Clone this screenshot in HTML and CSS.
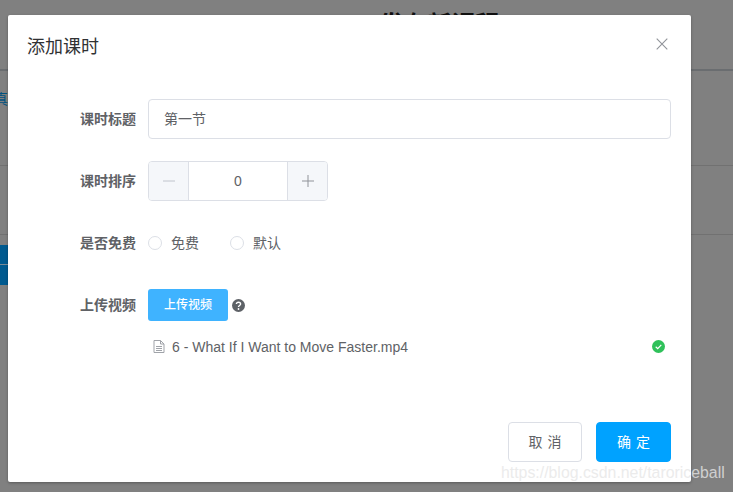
FILE: index.html
```html
<!DOCTYPE html>
<html lang="zh-CN">
<head>
<meta charset="utf-8">
<title>添加课时</title>
<link rel="stylesheet" href="styles.css">
</head>
<body>
<div class="page">
  <div class="bg-head"><span class="bg-title">发布新课程</span></div>
  <div class="bg-row bg-row-a"><span class="bg-link">真</span></div>
  <div class="bg-row bg-row-b"></div>
  <div class="bg-blue"><div class="bg-blue-cell"></div><div class="bg-blue-cell bg-blue-last"></div></div>

  <div class="modal">
    <header class="modal-head">
      <h2 class="modal-title">添加课时</h2>
      <svg class="close" width="12" height="12" viewBox="0 0 12 12" aria-label="关闭"><path d="M.7.7l10.6 10.6M11.3.7L.7 11.3" fill="none" stroke="#909399" stroke-width="1.1"/></svg>
    </header>
    <form class="form">
      <div class="item">
        <label class="label">课时标题</label>
        <div class="control"><div class="input">第一节</div></div>
      </div>
      <div class="item">
        <label class="label">课时排序</label>
        <div class="control">
          <div class="stepper">
            <span class="step step-l"><svg width="12" height="12" viewBox="0 0 12 12"><path d="M0 6h12" stroke="#c0c4cc" stroke-width="1"/></svg></span>
            <span class="value">0</span>
            <span class="step step-r"><svg width="12" height="12" viewBox="0 0 12 12"><path d="M0 6h12M6 0v12" stroke="#909399" stroke-width="1"/></svg></span>
          </div>
        </div>
      </div>
      <div class="item">
        <label class="label">是否免费</label>
        <div class="control radios">
          <span class="radio"><i class="dot"></i>免费</span>
          <span class="radio"><i class="dot"></i>默认</span>
        </div>
      </div>
      <div class="item item-upload">
        <label class="label">上传视频</label>
        <div class="control upload">
          <span class="upload-btn">上传视频</span>
          <svg class="help" width="13" height="13" viewBox="0 0 13 13"><circle cx="6.5" cy="6.5" r="6.5" fill="#5e6267"/><path d="M4.4 5.1c0-1.2.9-1.9 2.1-1.9s2.1.7 2.1 1.8c0 1.5-2.1 1.5-2.1 3" fill="none" stroke="#fff" stroke-width="1.4"/><circle cx="6.5" cy="10" r=".9" fill="#fff"/></svg>
        </div>
      </div>
      <div class="file">
        <svg class="file-icon" width="12" height="13" viewBox="0 0 12 13"><path d="M1 .5h6.5L11 4v8.5H1z" fill="none" stroke="#a0a3a9"/><path d="M7.5.5V4H11M3 6.5h6M3 8.5h6M3 10.5h6" fill="none" stroke="#a0a3a9"/></svg>
        <span class="file-name">6 - What If I Want to Move Faster.mp4</span>
        <svg class="file-ok" width="13" height="13" viewBox="0 0 13 13"><circle cx="6.5" cy="6.5" r="6.5" fill="#2fc15a"/><path d="M3.7 6.7l2 1.9 3.6-3.8" fill="none" stroke="#fff" stroke-width="1.2"/></svg>
      </div>
    </form>
    <footer class="modal-foot">
      <span class="btn btn-cancel">取 消</span>
      <span class="btn btn-ok">确 定</span>
    </footer>
  </div>
  <div class="watermark">https://blog.csdn.net/taroriceball</div>
</div>
</body>
</html>
```

FILE: styles.css
```css
* { box-sizing: border-box; }
html, body { margin: 0; padding: 0; }
body { font-family: "Liberation Sans", "Noto Sans CJK SC", sans-serif; }

.page {
  position: relative;
  width: 733px;
  height: 492px;
  overflow: hidden;
  background: #808080;
}

.bg-head {
  height: 71px;
  border-bottom: 2px solid #6a6d70;
  text-align: center;
}
.bg-title {
  display: block;
  margin-left: 146px;
  padding-top: 10px;
  font-size: 24px;
  line-height: 30px;
  font-weight: 700;
  color: #111;
}
.bg-row { border-bottom: 1px solid #717171; }
.bg-row-a { height: 95px; padding-top: 18px; }
.bg-row-b { height: 69px; }
.bg-link { display: block; margin-left: -6px; font-size: 14px; line-height: 20px; color: #00527f; }
.bg-blue { width: 8px; margin-top: 10px; }
.bg-blue-cell { height: 20px; background: #005a8f; border-bottom: 1px solid #7a8a96; }
.bg-blue-last { border-bottom: 0; }

.modal {
  position: absolute;
  left: 8px;
  top: 15px;
  width: 683px;
  height: 467px;
  display: flex;
  flex-direction: column;
  background: #fff;
  border-radius: 2px;
  box-shadow: 0 1px 3px rgba(0, 0, 0, .3);
}
.modal-head {
  display: flex;
  justify-content: space-between;
  align-items: flex-start;
  height: 84px;
  padding: 20px 23px 0 19px;
}
.modal-title {
  margin: 0;
  font-size: 18px;
  line-height: 24px;
  font-weight: 400;
  color: #303133;
}
.close { margin-top: 3px; }

.form { flex: 1; padding-right: 20px; }
.item { display: flex; min-height: 40px; margin-bottom: 22px; }
.item-upload { margin-bottom: 0; }
.label {
  width: 128px;
  text-align: right;
  font-size: 14px;
  line-height: 40px;
  font-weight: 700;
  color: #606266;
}
.control { flex: 1; margin-left: 12px; }
.input {
  height: 40px;
  padding: 0 15px;
  border: 1px solid #dcdfe6;
  border-radius: 4px;
  font-size: 14px;
  line-height: 38px;
  color: #606266;
}
.stepper {
  display: flex;
  width: 180px;
  height: 40px;
  border: 1px solid #dcdfe6;
  border-radius: 4px;
  overflow: hidden;
}
.step {
  display: flex;
  align-items: center;
  justify-content: center;
  width: 40px;
  background: #f5f7fa;
}
.step-l { border-right: 1px solid #dcdfe6; }
.step-r { border-left: 1px solid #dcdfe6; }
.value {
  flex: 1;
  text-align: center;
  font-size: 14px;
  line-height: 38px;
  color: #606266;
}
.radios { display: flex; gap: 31px; align-items: center; }
.radio {
  display: flex;
  align-items: center;
  gap: 9px;
  font-size: 14px;
  line-height: 38px;
  color: #606266;
}
.dot {
  display: block;
  width: 14px;
  height: 14px;
  border: 1px solid #dcdfe6;
  border-radius: 50%;
}
.upload { display: flex; align-items: center; gap: 4px; height: 40px; }
.upload-btn {
  width: 80px;
  height: 32px;
  border-radius: 3px;
  background: #3fb3ff;
  color: #fff;
  font-size: 12px;
  font-weight: 500;
  line-height: 32px;
  text-align: center;
}
.file {
  display: flex;
  align-items: center;
  height: 25px;
  margin: 9px 0 0 145px;
  color: #606266;
  font-size: 14px;
}
.file-name { flex: 1; margin-left: 7px; }
.file-ok { margin-right: 6px; }

.modal-foot {
  display: flex;
  justify-content: flex-end;
  gap: 14px;
  padding: 0 20px 20px 0;
}
.btn {
  height: 40px;
  border-radius: 4px;
  font-size: 14px;
  line-height: 38px;
  text-align: center;
  word-spacing: 1px;
}
.btn-cancel { width: 74px; border: 1px solid #dcdfe6; color: #606266; }
.btn-ok { width: 75px; border: 1px solid #00a2ff; background: #00a2ff; color: #fff; }

.watermark {
  position: absolute;
  left: 501px;
  top: 463px;
  font-size: 15.85px;
  line-height: 20px;
  color: rgba(230, 230, 230, .8);
  white-space: nowrap;
}
```
